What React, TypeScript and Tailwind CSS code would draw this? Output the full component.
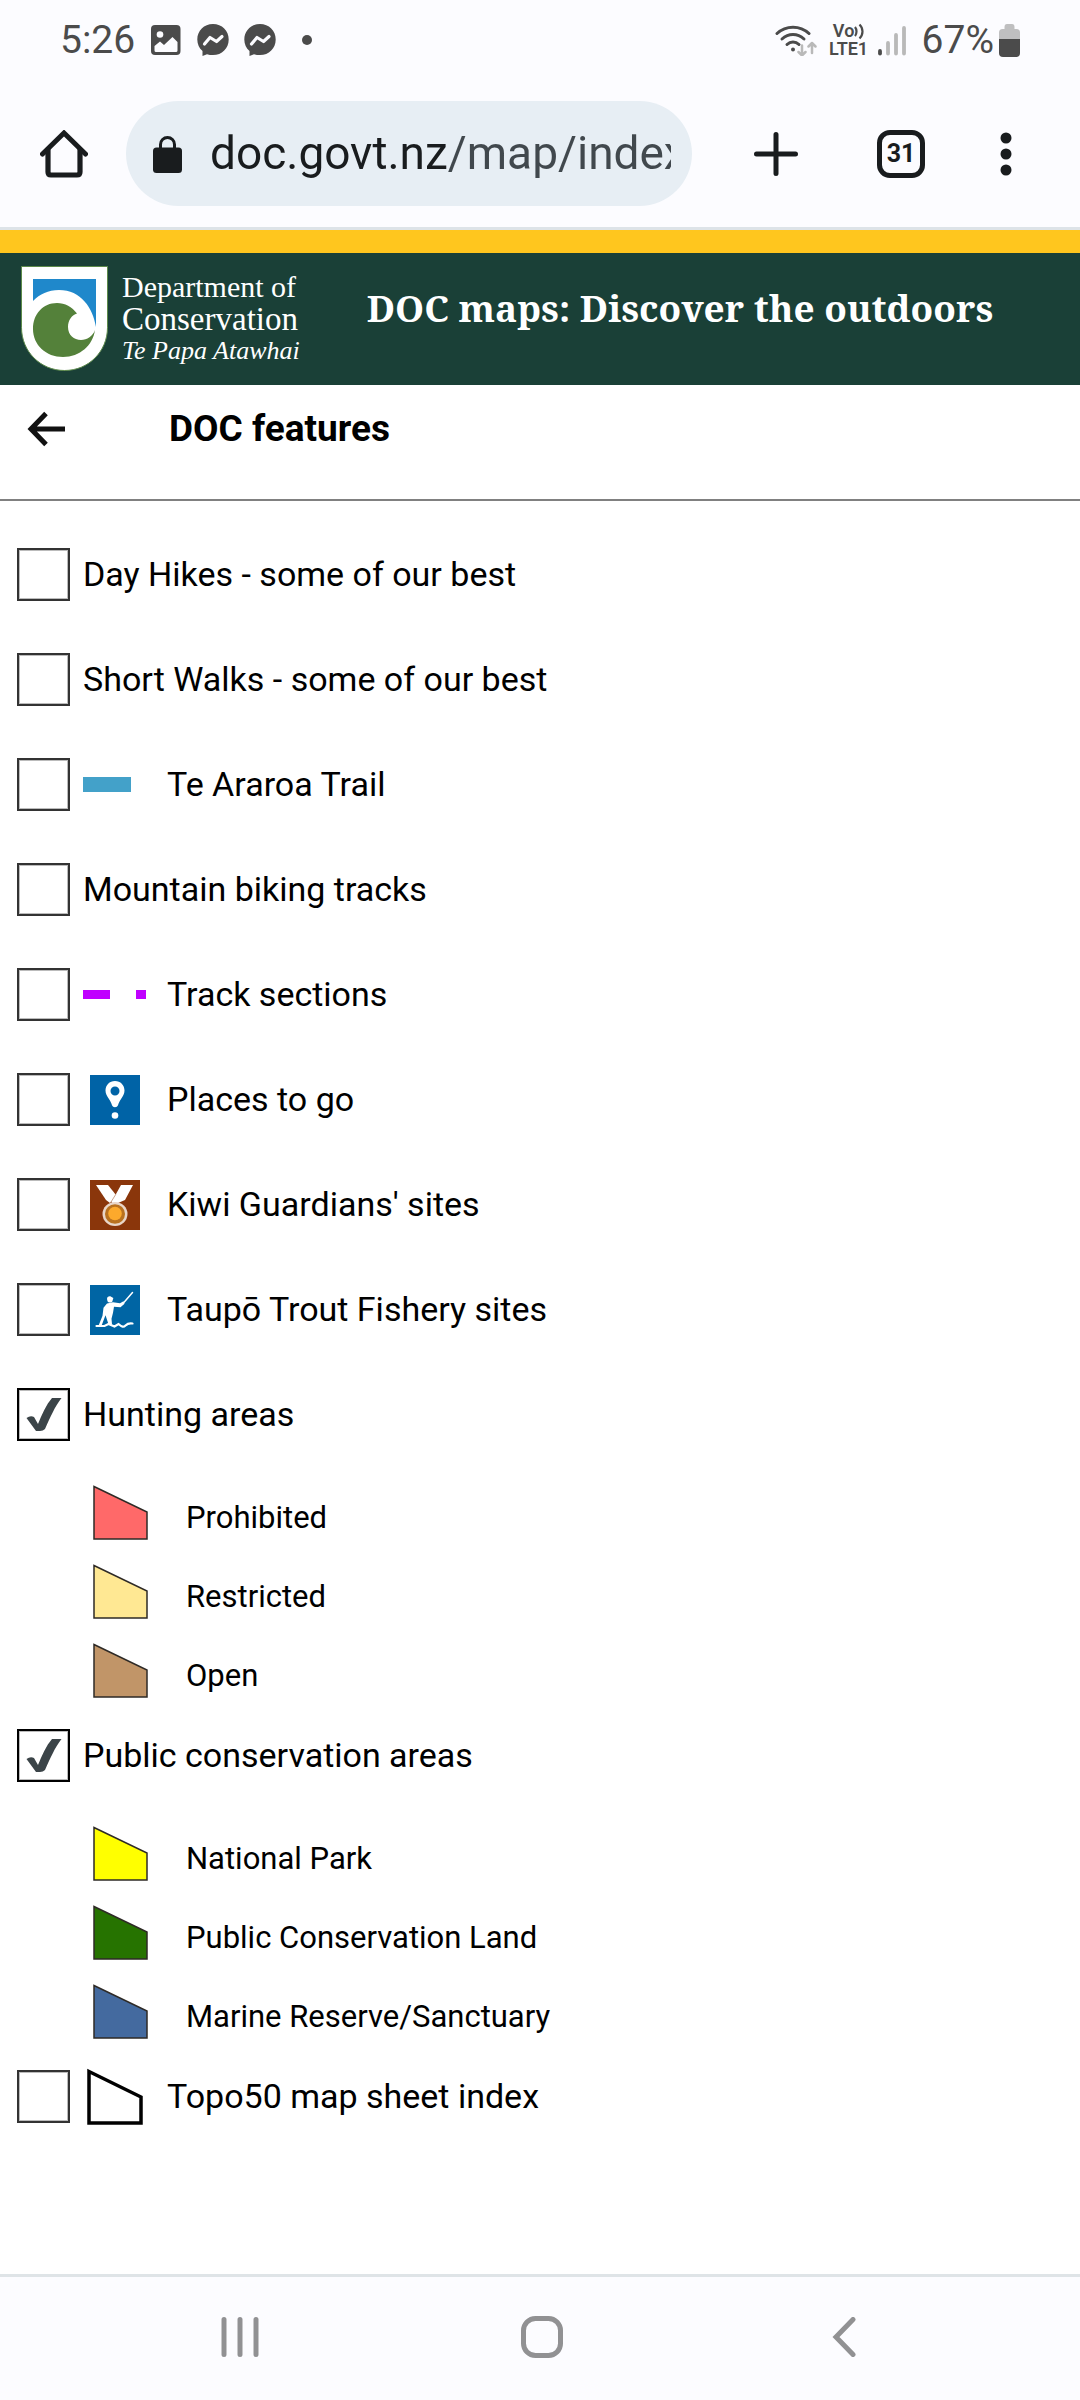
import { useState, type ReactNode } from 'react';

interface LegendItem {
    label: string;
    color: string;
}

interface Layer {
    id: string;
    label: string;
    icon?: ReactNode;
    checked?: boolean;
    legend?: LegendItem[];
}

function TrailIcon() {
    return (
        <svg className="w-16 h-[50px]" viewBox="0 0 64 50">
            <rect x="0" y="17" width="48" height="15" fill="#43a1c9" />
        </svg>
    );
}

function TrackIcon() {
    return (
        <svg className="w-[66px] h-[50px]" viewBox="0 0 66 50">
            <rect x="0" y="20" width="27" height="9" fill="#c000ff" />
            <rect x="53" y="20" width="10" height="9" fill="#c000ff" />
        </svg>
    );
}

function PlaceIcon() {
    return (
        <svg className="w-[50px] h-[50px] ml-[7px]" viewBox="0 0 50 50">
            <rect width="50" height="50" fill="#0063a6" />
            <path
                fillRule="evenodd"
                fill="#fff"
                d="M25 6c-5.500 0-9.500 4.200-9.500 9.600 0 3.200 1.500 5.600 3.300 8.200 1.700 2.600 2.600 4.600 3.200 6.400.5 1.300 1.600 2 3 2s2.500-.7 3-2c.6-1.800 1.500-3.800 3.200-6.400 1.800-2.600 3.300-5 3.300-8.200C34.500 10.200 30.500 6 25 6zm0 5.500a4.500 4.500 0 1 1 0 9 4.500 4.500 0 0 1 0-9z"
            />
            <circle cx="25" cy="40.500" r="3.300" fill="#fff" />
        </svg>
    );
}

function MedalIcon() {
    return (
        <svg className="w-[50px] h-[50px] ml-[7px]" viewBox="0 0 50 50">
            <rect width="50" height="50" fill="#8a360b" />
            <path d="M6 5h12l8 10-6 8-4-3z" fill="#fff" />
            <path d="M31 5h12l-8 15-7 3h-6l-1-3 5-6z" fill="#fff" />
            <path d="M26 14l-5 8" stroke="#c9a48f" strokeWidth="1" />
            <ellipse cx="25" cy="34" rx="12.500" ry="12" fill="#e9d5c8" />
            <ellipse cx="25" cy="34" rx="10" ry="9.800" fill="#b9711f" />
            <circle cx="25" cy="33.500" r="6.800" fill="#fca92c" />
        </svg>
    );
}

function FishingIcon() {
    return (
        <svg className="w-[50px] h-[50px] ml-[7px]" viewBox="0 0 50 50">
            <rect width="50" height="50" fill="#0065a4" />
            <g fill="#fff">
                <path d="M17 14c0-2 1.500-3 3.300-2.700l3 1.700-.8 3c-.6 2-4.300 2-5 .3z" />
                <path d="M17 18.500l6-1.200 7 1 3.500-2 1 2.500-4 3.500-6.500-.5-1 6-1.500 6 .5 5.500h-3.500l-3-9-4 10.500H8.500l4-10 1-8z" />
            </g>
            <g fill="none" stroke="#fff" strokeLinecap="round">
                <path d="M33 18.500L42.500 7.500" strokeWidth="1.500" />
                <path d="M6.500 41h8l4-2 6 2.500 4-2.500c3.500 3 5 3.500 7 1.500s4-2.500 7-2" strokeWidth="2.200" />
            </g>
        </svg>
    );
}

function SheetIcon() {
    return (
        <svg className="w-14 h-[57px] ml-1" viewBox="0 0 56 57">
            <path d="M2 3.500L54 29v26H2z" fill="#fff" stroke="#000" strokeWidth="3.500" />
        </svg>
    );
}

function AreaSwatch({ color }: { color: string }) {
    return (
        <svg className="w-[55px] h-[55px] shrink-0" viewBox="0 0 55 55">
            <path d="M1 1.500L54 27v27H1z" fill={color} stroke="#2e2a26" strokeWidth="1.500" />
        </svg>
    );
}

const layers: Layer[] = [
    { id: 'day-hikes', label: 'Day Hikes - some of our best' },
    { id: 'short-walks', label: 'Short Walks - some of our best' },
    { id: 'te-araroa', label: 'Te Araroa Trail', icon: <TrailIcon /> },
    { id: 'mtb', label: 'Mountain biking tracks' },
    { id: 'sections', label: 'Track sections', icon: <TrackIcon /> },
    { id: 'places', label: 'Places to go', icon: <PlaceIcon /> },
    { id: 'kiwi', label: "Kiwi Guardians' sites", icon: <MedalIcon /> },
    { id: 'taupo', label: 'Taupō Trout Fishery sites', icon: <FishingIcon /> },
    {
        id: 'hunting',
        label: 'Hunting areas',
        checked: true,
        legend: [
            { label: 'Prohibited', color: '#ff6969' },
            { label: 'Restricted', color: '#ffe893' },
            { label: 'Open', color: '#c19568' },
        ],
    },
    {
        id: 'conservation',
        label: 'Public conservation areas',
        checked: true,
        legend: [
            { label: 'National Park', color: '#ffff00' },
            { label: 'Public Conservation Land', color: '#267300' },
            { label: 'Marine Reserve/Sanctuary', color: '#446a9f' },
        ],
    },
    { id: 'topo50', label: 'Topo50 map sheet index', icon: <SheetIcon /> },
];

function MessengerIcon() {
    return (
        <svg className="w-8 h-8" viewBox="0 0 32 32">
            <path d="M16 0C7 0 .3 6.800.3 15.500c0 4.600 1.900 8.700 5.200 11.600V32l4.500-1.800c1.900.6 3.900.9 6 .9 9 0 15.700-6.800 15.700-15.600S25 0 16 0z" fill="#4b4b4b" />
            <path d="M7.500 20l5.500-6.500 6.500 4 5.500-5" fill="none" stroke="#fcfcff" strokeWidth="3.200" strokeLinecap="round" strokeLinejoin="round" />
        </svg>
    );
}

function StatusBar() {
    return (
        <div className="flex items-center justify-between h-20 px-[60px] text-[39px] leading-[46px] text-[#4b4b4b]">
            <div className="flex items-center">
                <span>5:26</span>
                <svg className="w-[30px] h-[30px] ml-4" viewBox="0 0 30 30">
                    <rect width="29.500" height="30" rx="4" fill="#4b4b4b" />
                    <circle cx="9" cy="9.500" r="3.300" fill="#fcfcff" />
                    <path d="M3.500 21l5.500-4.500 4 3.500 8.500-8 5 5v8.500a1.500 1.500 0 0 1-1.500 1.500H5a1.500 1.500 0 0 1-1.500-1.500z" fill="#fcfcff" />
                </svg>
                <div className="flex gap-[15px] ml-4">
                    <MessengerIcon />
                    <MessengerIcon />
                </div>
                <div className="size-[10px] ml-[26px] rounded-full bg-[#4b4b4b]" />
            </div>
            <div className="flex items-center">
                <svg className="w-[42px] h-8" viewBox="0 0 42 32">
                    <g fill="none" stroke="#4b4b4b" strokeWidth="3" strokeLinecap="round">
                        <path d="M2 9.500c9-8.500 23-8.500 32 0" />
                        <path d="M7 15c6.500-6 15.500-6 22 0" />
                        <path d="M12 20.500c3.500-3.500 8.500-3.500 12 0" />
                    </g>
                    <circle cx="18" cy="25.500" r="2" fill="#4b4b4b" />
                    <g fill="none" stroke="#b9b9b9" strokeWidth="2.500" strokeLinecap="round" strokeLinejoin="round">
                        <path d="M27 21.500v10M23.500 28l3.500 3.500 3.500-3.500" />
                        <path d="M37 29V19M33.500 22.500L37 19l3.500 3.500" />
                    </g>
                </svg>
                <div className="flex flex-col items-center w-10 ml-3 text-[18px] leading-[18px] font-semibold">
                    <span className="flex items-center">
                        Vo
                        <svg className="w-[10px] h-[17px]" viewBox="0 0 10 17">
                            <path d="M1 4c2 2.500 2 6.500 0 9M5.500 1.500c4 4 4 10 0 14" fill="none" stroke="#4b4b4b" strokeWidth="2.200" />
                        </svg>
                    </span>
                    <span>LTE1</span>
                </div>
                <svg className="w-[29px] h-[31px] ml-[9px]" viewBox="0 0 29 31">
                    <g strokeWidth="3.800" strokeLinecap="round">
                        <path d="M2 26v2.500" stroke="#4b4b4b" />
                        <path d="M10 18v10.500M18 10v18.500M26 3v25.500" stroke="#b9b9b9" />
                    </g>
                </svg>
                <span className="ml-[15px]">67%</span>
                <svg className="w-[21px] h-[33px] ml-[5px]" viewBox="0 0 21 33">
                    <path d="M0 15V8.500Q0 5 3.500 5H5.500V3Q5.500 0 8 0h5q2.500 0 2.500 3v2h2Q21 5 21 8.500V15z" fill="#bfbfc0" />
                    <path d="M0 15h21v14q0 4-4 4H4q-4 0-4-4z" fill="#4b4b4b" />
                </svg>
            </div>
        </div>
    );
}

function BrowserBar() {
    const [url, setUrl] = useState('doc.govt.nz/map/index.html');

    return (
        <div className="flex items-center h-[150px] pl-10 border-b-[3px] border-[#dde3e8]">
            <button type="button" aria-label="Home" className="shrink-0">
                <svg className="w-12 h-12" viewBox="0 0 48 48" fill="none" stroke="#191c1e" strokeLinecap="round" strokeLinejoin="round">
                    <path d="M2.500 24L24 3l21.500 21" strokeWidth="5" strokeLinejoin="miter" />
                    <path d="M8 20v22q0 3 3 3h26q3 0 3-3V20" strokeWidth="5.200" />
                </svg>
            </button>
            <label className="flex items-center flex-1 min-w-0 h-[105px] ml-[38px] pl-[27px] pr-[21px] rounded-full bg-[#e7eef4]">
                <svg className="w-[29px] h-[38px] shrink-0" viewBox="0 0 29 38">
                    <path d="M7.500 15V9.500a7 7 0 0 1 14 0V15" fill="none" stroke="#191c1e" strokeWidth="3" />
                    <rect x="0" y="12.500" width="29" height="25.500" rx="3.500" fill="#191c1e" />
                </svg>
                <input
                    type="text"
                    aria-label="Address"
                    value={url}
                    onChange={(e) => setUrl(e.target.value)}
                    className="flex-1 min-w-0 h-[60px] ml-7 text-[46px] text-transparent bg-clip-text bg-[linear-gradient(90deg,#191c1e_237px,#41484d_237px)] outline-none"
                />
            </label>
            <button type="button" aria-label="New tab" className="shrink-0 ml-[62px]">
                <svg className="w-11 h-11" viewBox="0 0 44 44">
                    <path d="M22 2.500v39M2.500 22h39" stroke="#191c1e" strokeWidth="5" strokeLinecap="round" />
                </svg>
            </button>
            <button
                type="button"
                aria-label="Switch tabs"
                className="flex items-center justify-center size-12 shrink-0 ml-[79px] border-[5px] border-[#191c1e] rounded-[13px] text-[25px] leading-none font-bold text-[#191c1e]"
            >
                31
            </button>
            <button type="button" aria-label="More" className="flex justify-center w-16 mr-[42px] ml-[49px] shrink-0">
                <svg className="w-3 h-11" viewBox="0 0 12 44" fill="#191c1e">
                    <circle cx="6" cy="6" r="5.500" />
                    <circle cx="6" cy="22" r="5.500" />
                    <circle cx="6" cy="38" r="5.500" />
                </svg>
            </button>
        </div>
    );
}

function SiteHeader() {
    return (
        <header className="flex items-start h-[155px] border-t-[23px] border-[#ffc61e] bg-[#1a4037] text-white">
            <a href="#" className="flex items-start shrink-0 pl-[21px] pt-[13px]">
                <svg className="w-[87px] h-[105px]" viewBox="0 0 87 105">
                    <path d="M.5.500h86v61c0 24-19 43-43 43S.5 85.500.5 61.500z" fill="#fff" stroke="#5c8a4a" strokeWidth="1" />
                    <path d="M12 13h63v48C72 42 60 24 38 24c-11 0-19 4-26 11z" fill="#1f88cb" />
                    <path d="M56 47.500C51 41 44 37 36 37 22 37 12 48 12 63c0 16 13 28 30 28 17 0 30-12 32-27-2 6-8 10-14 10-7 0-13-5-13-13 0-7 4-12 9-13.500z" fill="#54813a" />
                </svg>
                <div className="flex flex-col ml-[14px] pt-[5px] font-['Liberation_Serif',serif]">
                    <span className="text-[30px] leading-8">Department of</span>
                    <span className="text-[33px] leading-8">Conservation</span>
                    <span className="text-[26px] leading-8 italic">Te Papa Atawhai</span>
                </div>
            </a>
            <h1 className="ml-[67px] pt-[31px] text-[37px] leading-[48px] font-bold whitespace-nowrap font-['Noto_Serif','DejaVu_Serif_Condensed','DejaVu_Serif',serif]">
                DOC maps: Discover the outdoors
            </h1>
        </header>
    );
}

function LayerRow({ layer }: { layer: Layer }) {
    const [checked, setChecked] = useState(layer.checked ?? false);

    return (
        <li>
            <label className="flex items-center h-[105px] text-[34px]">
                <span className="relative shrink-0 size-[53px] mr-[13px]">
                    <input
                        type="checkbox"
                        checked={checked}
                        onChange={(e) => setChecked(e.target.checked)}
                        className="block size-full appearance-none bg-white border-2 border-[#333] checked:border-black shadow-[inset_0_0_0_1px_#bbb]"
                    />
                    {checked && (
                        <svg className="absolute inset-0 size-full pointer-events-none" viewBox="0 0 53 53">
                            <path d="M9.500 30q4-3 7.500-1l4 7c4-10 8-19 14-26h9.500c-7 9-11 19-16.500 31q-2 2-5 2h-4z" fill="#3b4448" />
                        </svg>
                    )}
                </span>
                {layer.icon && <span className="flex items-center w-[84px] shrink-0">{layer.icon}</span>}
                {layer.label}
            </label>
            {layer.legend && (
                <ul className="flex flex-col gap-6 pt-[18px] pb-[5px] pl-[76px]">
                    {layer.legend.map((item) => (
                        <li key={item.label} className="flex items-end text-[31px] leading-[45px]">
                            <AreaSwatch color={item.color} />
                            <span className="ml-[38px]">{item.label}</span>
                        </li>
                    ))}
                </ul>
            )}
        </li>
    );
}

function NavBar() {
    return (
        <nav className="flex h-[126px] pl-[89px] pr-[85px] pb-1 border-t-[3px] border-[#dfe4e7] bg-[#fcfcff]">
            <button type="button" aria-label="Recent apps" className="flex flex-1 items-center justify-center">
                <svg className="w-10 h-10" viewBox="0 0 40 40">
                    <path d="M4 2.500v35M20 2.500v35M36 2.500v35" stroke="#919193" strokeWidth="5" strokeLinecap="round" />
                </svg>
            </button>
            <button type="button" aria-label="Home screen" className="flex flex-1 items-center justify-center">
                <svg className="w-[42px] h-[42px]" viewBox="0 0 42 42">
                    <rect x="2.500" y="2.500" width="37" height="37" rx="12" fill="none" stroke="#919193" strokeWidth="5" />
                </svg>
            </button>
            <button type="button" aria-label="Back" className="flex flex-1 items-center justify-center">
                <svg className="w-6 h-10" viewBox="0 0 24 40">
                    <path d="M21 2.500L4 20l17 17.500" fill="none" stroke="#919193" strokeWidth="5" strokeLinecap="round" />
                </svg>
            </button>
        </nav>
    );
}

export default function App() {
    return (
        <div className="flex flex-col min-h-screen bg-white font-[Roboto,sans-serif] text-black">
            {/* Phone and browser chrome */}
            <div className="bg-[#fcfcff]">
                <StatusBar />
                <BrowserBar />
            </div>

            <SiteHeader />

            {/* Panel title */}
            <div className="flex items-center h-[116px] pb-[26px] pl-[27px] border-b-2 border-[#808080]">
                <button type="button" aria-label="Back to map" className="shrink-0">
                    <svg className="w-10 h-9" viewBox="0 0 40 36">
                        <path d="M38 18H5M19 2.500L4 18l15 15.500" fill="none" stroke="#111" strokeWidth="5" />
                    </svg>
                </button>
                <h2 className="ml-[102px] text-[37px] font-bold">DOC features</h2>
            </div>

            {/* Layer list */}
            <main className="flex-1 pt-[21px] pl-[17px]">
                <ul>
                    {layers.map((layer) => (
                        <LayerRow key={layer.id} layer={layer} />
                    ))}
                </ul>
            </main>

            <NavBar />
        </div>
    );
}
